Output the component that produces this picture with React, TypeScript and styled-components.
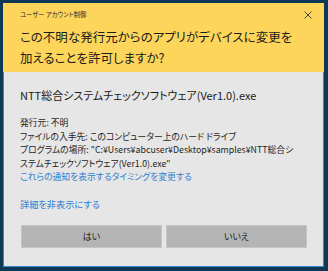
import React from "react";
import styled, { createGlobalStyle } from "styled-components";

const Global = createGlobalStyle`
  html, body { margin: 0; padding: 0; }
  body {
    background: #0e3955;
    font-family: "Noto Sans CJK JP", "Noto Sans", sans-serif;
    font-feature-settings: "palt";
  }
`;

const Screen = styled.div`
  width: 328px;
  height: 271px;
  box-sizing: border-box;
  padding: 3px 4px 4px 3px;
  background: #0e3955;
`;

const Dialog = styled.div`
  width: 321px;
  height: 264px;
  display: flex;
  flex-direction: column;
  background: #e6e6e6;
`;

const Header = styled.div`
  height: 69px;
  box-sizing: border-box;
  background: #fdd55b;
  padding: 7px 12px 0 17px;
  display: flex;
  flex-direction: column;
`;

const TitleRow = styled.div`
  height: 10px;
  display: flex;
  align-items: center;
  justify-content: space-between;
`;

const Title = styled.span`
  font-size: 6.3px;
  line-height: 10px;
  color: #2a2a2a;
`;

const Heading = styled.div`
  margin-top: 6px;
  font-size: 12.5px;
  line-height: 21px;
  color: #1b1b1b;
`;

const Body = styled.div`
  flex: 1;
  display: flex;
  flex-direction: column;
  border: 1px solid #3a86d2;
  border-top: none;
  padding: 15px 16px 16px 16px;
`;

const AppName = styled.div`
  font-size: 11px;
  line-height: 16px;
  color: #1b1b1b;
`;

const Details = styled.div`
  margin-top: 13px;
  font-size: 8.8px;
  line-height: 13.5px;
  color: #1e1e1e;
  white-space: nowrap;
`;

const Link = styled.div`
  color: #2f7fd0;
  font-size: 8.8px;
  line-height: 13.5px;
`;

const ToggleLink = styled(Link)`
  margin-top: 14px;
  font-size: 9.2px;
`;

const Buttons = styled.div`
  margin-top: 14px;
  display: flex;
  gap: 4px;
  padding-left: 1px;
`;

const Button = styled.button`
  flex: 1;
  height: 23px;
  box-sizing: border-box;
  background: #b4b4b4;
  border: 1px solid #c6c6c6;
  font-family: "Noto Sans CJK JP", sans-serif;
  font-feature-settings: "palt";
  font-size: 9px;
  color: #1e1e1e;
  padding: 0;
`;

const CloseIcon = () => (
  <svg width="8" height="8" viewBox="0 0 8 8">
    <path d="M0.5 0.5 L7.5 7.5 M7.5 0.5 L0.5 7.5" stroke="#444" strokeWidth="1" fill="none" />
  </svg>
);

export default function App() {
  return (
    <Screen>
      <Global />
      <Dialog>
        <Header>
          <TitleRow>
            <Title>ユーザー アカウント制御</Title>
            <CloseIcon />
          </TitleRow>
          <Heading>
            この不明な発行元からのアプリがデバイスに変更を
            <br />
            加えることを許可しますか?
          </Heading>
        </Header>
        <Body>
          <AppName>NTT総合システムチェックソフトウェア(Ver1.0).exe</AppName>
          <Details>
            <div>発行元: 不明</div>
            <div>ファイルの入手先: このコンピューター上のハード ドライブ</div>
            <div>プログラムの場所: "C:¥Users¥abcuser¥Desktop¥samples¥NTT総合シ</div>
            <div>ステムチェックソフトウェア(Ver1.0).exe"</div>
            <Link>これらの通知を表示するタイミングを変更する</Link>
          </Details>
          <ToggleLink>詳細を非表示にする</ToggleLink>
          <Buttons>
            <Button>はい</Button>
            <Button>いいえ</Button>
          </Buttons>
        </Body>
      </Dialog>
    </Screen>
  );
}
